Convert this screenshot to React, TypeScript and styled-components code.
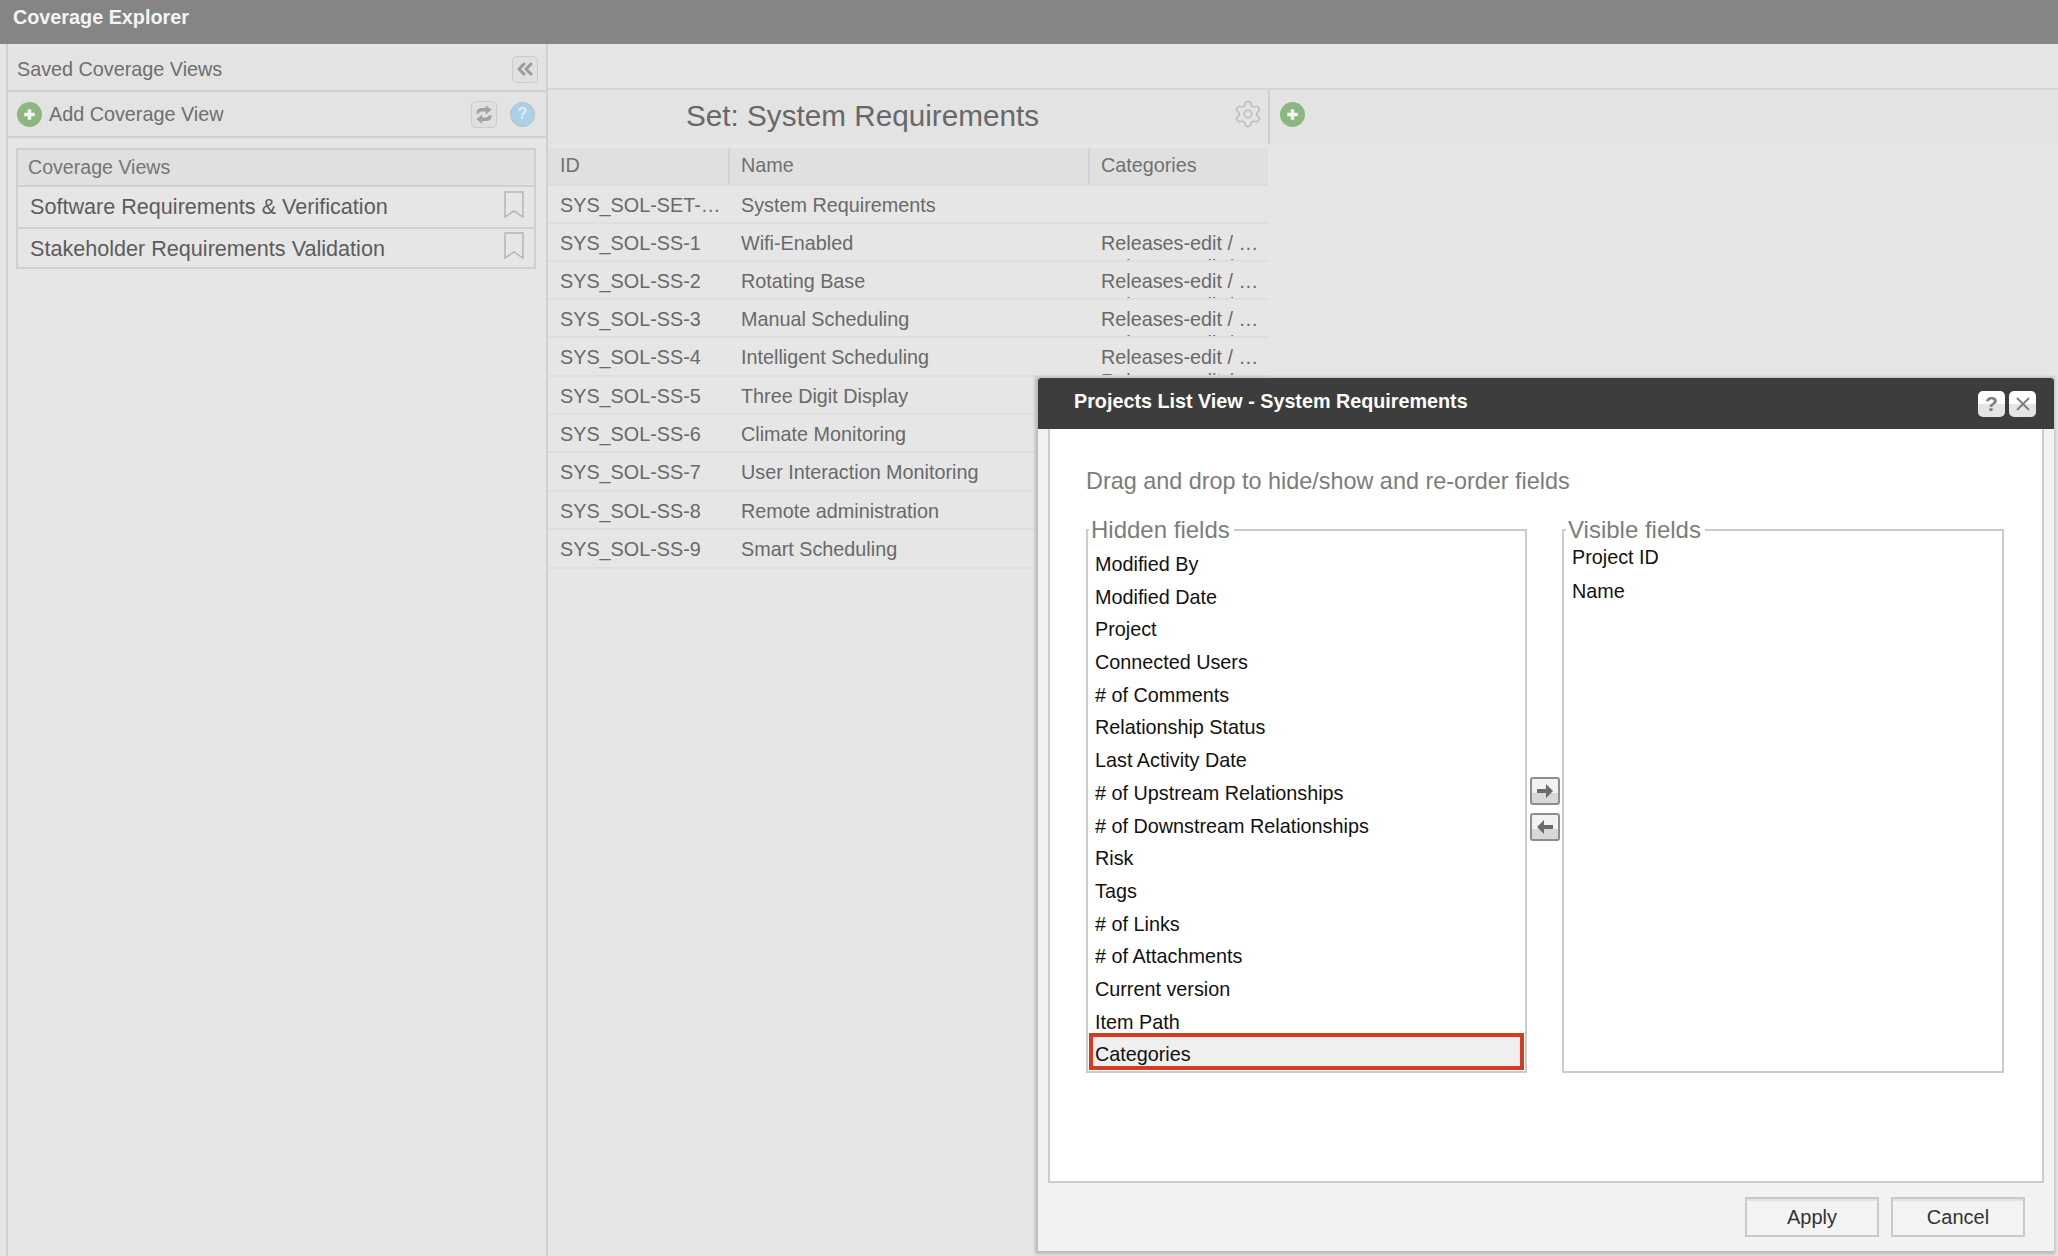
import { ChevronsLeft, Settings, X } from 'lucide-react';
import styled, { createGlobalStyle } from 'styled-components';

const GlobalStyle = createGlobalStyle`
  html, body {
    margin: 0;
    padding: 0;
    background: #e6e6e6;
    font-family: "Liberation Sans", Arial, sans-serif;
  }
  * { box-sizing: border-box; }
`;

const Page = styled.div`
  position: relative;
  width: 2058px;
  height: 1256px;
  overflow: hidden;
  background: #e6e6e6;
  color: #666;
`;

const TopBar = styled.header`
  height: 44px;
  padding-left: 13px;
  background: #858585;
  color: #f4f4f4;
  font-size: 19.8px;
  font-weight: 700;
  line-height: 35px;
`;

const Workspace = styled.div`
  display: flex;
  height: 1212px;
  padding-left: 6px;
`;

const Sidebar = styled.aside`
  width: 542px;
  padding-top: 4px;
  border-left: 2px solid #d0d0d0;
  border-right: 2px solid #d0d0d0;
`;

const SidebarRow = styled.div<{ $h: number }>`
  display: flex;
  align-items: center;
  height: ${p => p.$h}px;
  padding: 0 11px 0 9px;
  background: #e3e3e3;
  border-bottom: 2px solid #d0d0d0;
  font-size: 19.8px;
  color: #6e6e6e;
`;

const SidebarLabel = styled.span`
  flex: 1;
`;

const AddLabel = styled(SidebarLabel)`
  margin-left: 7px;
`;

const ToolButton = styled.span<{ $edge?: boolean }>`
  display: flex;
  align-items: center;
  justify-content: center;
  width: 26px;
  height: 27px;
  margin-right: ${p => (p.$edge ? -3 : 0)}px;
  border: 1px solid #cbcbcb;
  border-radius: 5px;
  background: #e0e0e0;
  color: #9a9a9a;
`;

const HelpDot = styled.span`
  display: flex;
  align-items: center;
  justify-content: center;
  width: 25px;
  height: 25px;
  margin-left: 13px;
  border: 1px solid #bdbdbd;
  border-radius: 50%;
  background: #a9d2ea;
  color: #e2eef5;
  font-size: 16px;
  font-weight: 700;
`;

const ViewsBox = styled.section`
  margin: 10px 10px 0 8px;
  border: 2px solid #cfcfcf;
`;

const ViewsHeading = styled.div`
  height: 37px;
  padding-left: 10px;
  background: #e0e0e0;
  border-bottom: 2px solid #cfcfcf;
  font-size: 19.6px;
  line-height: 35px;
  color: #757575;
`;

const ViewItem = styled.div<{ $last?: boolean }>`
  display: flex;
  justify-content: space-between;
  height: ${p => (p.$last ? 38 : 42)}px;
  padding: 0 10px 0 12px;
  border-bottom: ${p => (p.$last ? 'none' : '2px solid #cfcfcf')};
  font-size: 21.6px;
  line-height: 39px;
  color: #5c5c5c;
`;

const BookmarkMark = styled.svg<{ $top: number }>`
  margin-top: ${p => p.$top}px;
  width: 20px;
  height: 27px;
`;

const Main = styled.main`
  width: 1510px;
`;

const TopStrip = styled.div`
  height: 46px;
  border-bottom: 2px solid #d6d6d6;
`;

const SetRow = styled.div`
  display: flex;
  height: 54px;
  background: #e3e3e3;
`;

const SetHead = styled.div`
  display: flex;
  align-items: center;
  width: 722px;
  padding-left: 138px;
  border-right: 2px solid #d0d0d0;
`;

const SetTitle = styled.h1`
  flex: 1;
  margin: -2px 0 0;
  font-size: 29.7px;
  font-weight: 400;
  color: #686868;
`;

const GearIcon = styled(Settings)`
  margin: -6px 5px 0 0;
  color: #bdbdbd;
`;

const AddColumn = styled.div`
  padding: 12px 0 0 10px;
`;

const TableWrap = styled.div`
  width: 720px;
  margin-top: 4px;
`;

const GridRow = styled.div<{ $h?: number }>`
  display: grid;
  grid-template-columns: 180px 360px 180px;
  height: ${p => p.$h ?? 38}px;
  border-bottom: 2px solid #dedede;
  font-size: 19.8px;
  color: #696969;
`;

const HeadRow = styled(GridRow)`
  background: #e0e0e0;
  border-bottom-color: #dcdcdc;
`;

const HeadCell = styled.div`
  padding-left: 11px;
  line-height: 35px;
  border-left: 2px solid #d2d2d2;
  color: #707070;
  &:first-child {
    padding-left: 12px;
    border-left: none;
  }
`;

const Cell = styled.div`
  padding: 0 8px 0 13px;
  overflow: hidden;
  white-space: nowrap;
  line-height: 39px;
  &:first-child { padding-left: 12px; }
`;

const CategoryCell = styled(Cell)`
  line-height: 24px;
  padding-top: 7px;
  white-space: normal;
`;

const Dialog = styled.div`
  position: absolute;
  left: 1038px;
  top: 378px;
  width: 1016px;
  height: 873px;
  background: #f2f2f2;
  box-shadow: -1px 1px 3px 2px #b9b9b9;
  color: #111;
`;

const DialogHeader = styled.div`
  display: flex;
  align-items: center;
  height: 51px;
  padding: 0 18px 0 36px;
  background: #3d3d3d;
  border-radius: 3px 3px 0 0;
`;

const DialogTitle = styled.h2`
  flex: 1;
  margin: -4px 0 0;
  font-size: 19.75px;
  font-weight: 700;
  color: #fff;
`;

const HeaderButton = styled.span`
  display: flex;
  align-items: center;
  justify-content: center;
  width: 27px;
  height: 26px;
  margin-left: 4px;
  border-radius: 5px;
  background: linear-gradient(#fdfdfd 0 50%, #e4e4e4 50%);
  color: #7d7d7d;
  font-size: 21px;
  font-weight: 700;
`;

const DialogBody = styled.div`
  height: 754px;
  margin: 0 10px;
  padding: 0 38px 0 36px;
  background: #fff;
  border: 2px solid #cdcdcd;
  border-top: none;
`;

const Instructions = styled.p`
  margin: 0;
  padding-top: 37px;
  height: 87px;
  font-size: 23.4px;
  line-height: 30px;
  color: #7c7c7c;
`;

const Columns = styled.div`
  display: flex;
`;

const FieldBox = styled.fieldset<{ $w: number; $inset: number }>`
  width: ${p => p.$w}px;
  height: 557px;
  margin: 0;
  padding: 0 1px 0 ${p => p.$inset}px;
  border: 2px solid #cbcbcb;
`;

const FieldLegend = styled.legend`
  padding: 0 4px 0 2px;
  font-size: 24px;
  line-height: 28px;
  color: #7c7c7c;
`;

const FieldList = styled.div<{ $offset: number }>`
  margin-top: ${p => p.$offset}px;
`;

const FieldItem = styled.div<{ $h?: number }>`
  height: ${p => p.$h ?? 32.7}px;
  padding-left: 6px;
  font-size: 19.8px;
  line-height: 32px;
  color: #111;
`;

const MarkedItem = styled(FieldItem)`
  position: relative;
  isolation: isolate;
  &::after {
    content: "";
    position: absolute;
    inset: -5px 0 1px 0;
    z-index: -1;
    background: #efefef;
    border: 4px solid #d43c21;
  }
`;

const MoveColumn = styled.div`
  display: flex;
  flex-direction: column;
  gap: 8px;
  width: 35px;
  padding: 261px 0 0 3px;
`;

const MoveButton = styled.span`
  display: flex;
  align-items: center;
  justify-content: center;
  width: 30px;
  height: 28px;
  border: 2px solid #8d8d8d;
  border-radius: 3px;
  background: linear-gradient(#f2f2f2 0 60%, #d8d8d8 60%);
`;

const DialogFooter = styled.div`
  display: flex;
  justify-content: flex-end;
  gap: 12px;
  padding: 14px 29px 0 0;
`;

const FooterButton = styled.button`
  width: 134px;
  height: 40px;
  padding: 0;
  border: 2px solid #c9c9c9;
  background: #f3f3f3;
  box-shadow: inset 0 3px 0 -1px #e2e2e2;
  font-family: inherit;
  font-size: 20px;
  color: #333;
`;

const hiddenFields = [
  'Modified By', 'Modified Date', 'Project', 'Connected Users', '# of Comments',
  'Relationship Status', 'Last Activity Date', '# of Upstream Relationships',
  '# of Downstream Relationships', 'Risk', 'Tags', '# of Links', '# of Attachments',
  'Current version', 'Item Path',
];

const requirements = [
  { id: 'SYS_SOL-SET-…', name: 'System Requirements' },
  { id: 'SYS_SOL-SS-1', name: 'Wifi-Enabled', cat: true },
  { id: 'SYS_SOL-SS-2', name: 'Rotating Base', cat: true },
  { id: 'SYS_SOL-SS-3', name: 'Manual Scheduling', cat: true },
  { id: 'SYS_SOL-SS-4', name: 'Intelligent Scheduling', cat: true, h: 39 },
  { id: 'SYS_SOL-SS-5', name: 'Three Digit Display' },
  { id: 'SYS_SOL-SS-6', name: 'Climate Monitoring' },
  { id: 'SYS_SOL-SS-7', name: 'User Interaction Monitoring', h: 39 },
  { id: 'SYS_SOL-SS-8', name: 'Remote administration' },
  { id: 'SYS_SOL-SS-9', name: 'Smart Scheduling', h: 39 },
];

function PlusDot({ size }: { size: number }) {
  return (
    <svg width={size} height={size} viewBox="0 0 26 26">
      <circle cx="13" cy="13" r="13" fill="#8cb87f" />
      <path d="M13 7.5v11M7.5 13h11" stroke="#f1f6ef" strokeWidth="3.6" />
    </svg>
  );
}

function SwapIcon() {
  return (
    <svg width="20" height="21" viewBox="0 0 17 18" fill="#a2a2a2">
      <path d="M2 8c0-3 2-4.500 5-4.500h3V1l5 4-5 4V6.500H7C5.500 6.500 4.500 7 4 8.500z" />
      <path d="M15 10c0 3-2 4.500-5 4.500H7V17l-5-4 5-4v2.500h3c1.500 0 2.500-.5 3-2z" />
    </svg>
  );
}

function ArrowIcon({ flip }: { flip?: boolean }) {
  return (
    <svg width="16" height="14" viewBox="0 0 16 14" fill="#6b6b6b" transform={flip ? 'scale(-1 1)' : undefined}>
      <path d="M0 5h9V0l7 7-7 7V9H0z" />
    </svg>
  );
}

function Bookmark({ top }: { top: number }) {
  return (
    <BookmarkMark $top={top} viewBox="0 0 20 27" fill="none" stroke="#b5b5b5" strokeWidth="1.500">
      <path d="M1 1h18v25l-9-6-9 6z" />
    </BookmarkMark>
  );
}

export default function App() {
  return (
    <Page>
      <GlobalStyle />
      <TopBar>Coverage Explorer</TopBar>
      <Workspace>
        <Sidebar>
          <SidebarRow $h={44}>
            <SidebarLabel>Saved Coverage Views</SidebarLabel>
            <ToolButton $edge><ChevronsLeft size={24} strokeWidth={3} /></ToolButton>
          </SidebarRow>
          <SidebarRow $h={46}>
            <PlusDot size={25} />
            <AddLabel>Add Coverage View</AddLabel>
            <ToolButton><SwapIcon /></ToolButton>
            <HelpDot>?</HelpDot>
          </SidebarRow>
          <ViewsBox>
            <ViewsHeading>Coverage Views</ViewsHeading>
            <ViewItem>Software Requirements &amp; Verification<Bookmark top={4} /></ViewItem>
            <ViewItem $last>Stakeholder Requirements Validation<Bookmark top={3} /></ViewItem>
          </ViewsBox>
        </Sidebar>
        <Main>
          <TopStrip />
          <SetRow>
            <SetHead>
              <SetTitle>Set: System Requirements</SetTitle>
              <GearIcon size={30} strokeWidth={1.2} />
            </SetHead>
            <AddColumn><PlusDot size={25} /></AddColumn>
          </SetRow>
          <TableWrap>
            <HeadRow>
              <HeadCell>ID</HeadCell>
              <HeadCell>Name</HeadCell>
              <HeadCell>Categories</HeadCell>
            </HeadRow>
            {requirements.map(r => (
              <GridRow key={r.id} $h={r.h}>
                <Cell>{r.id}</Cell>
                <Cell>{r.name}</Cell>
                {r.cat ? <CategoryCell>Releases-edit / …<br />Releases-edit / …</CategoryCell> : <Cell />}
              </GridRow>
            ))}
          </TableWrap>
        </Main>
      </Workspace>
      <Dialog>
        <DialogHeader>
          <DialogTitle>Projects List View - System Requirements</DialogTitle>
          <HeaderButton>?</HeaderButton>
          <HeaderButton><X size={22} strokeWidth={2} /></HeaderButton>
        </DialogHeader>
        <DialogBody>
          <Instructions>Drag and drop to hide/show and re-order fields</Instructions>
          <Columns>
            <FieldBox $w={441} $inset={1}>
              <FieldLegend>Hidden fields</FieldLegend>
              <FieldList $offset={4}>
                {hiddenFields.map(f => <FieldItem key={f}>{f}</FieldItem>)}
                <MarkedItem>Categories</MarkedItem>
              </FieldList>
            </FieldBox>
            <MoveColumn>
              <MoveButton><ArrowIcon /></MoveButton>
              <MoveButton><ArrowIcon flip /></MoveButton>
            </MoveColumn>
            <FieldBox $w={442} $inset={2}>
              <FieldLegend>Visible fields</FieldLegend>
              <FieldList $offset={-3}>
                <FieldItem $h={34}>Project ID</FieldItem>
                <FieldItem $h={34}>Name</FieldItem>
              </FieldList>
            </FieldBox>
          </Columns>
        </DialogBody>
        <DialogFooter>
          <FooterButton>Apply</FooterButton>
          <FooterButton>Cancel</FooterButton>
        </DialogFooter>
      </Dialog>
    </Page>
  );
}
